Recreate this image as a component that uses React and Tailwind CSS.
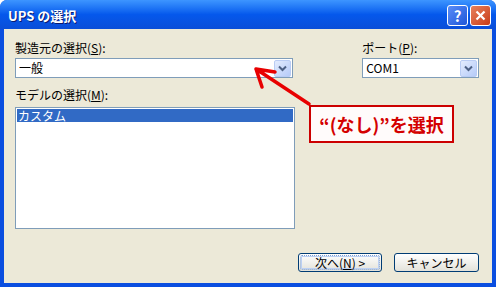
import React from "react";

const font = { fontFamily: '"Noto Sans CJK JP", "Noto Sans", sans-serif' };

function DropBtn() {
  return (
    <div className="w-[17px] h-[17px] rounded-[2px] border border-[#B9CCF4] bg-gradient-to-br from-[#E3ECFE] to-[#B6CBF8] flex items-center justify-center">
      <svg width="9" height="7" viewBox="0 0 9 7">
        <path d="M1 1.5 L4.5 5 L8 1.5" fill="none" stroke="#4D6185" strokeWidth="2" />
      </svg>
    </div>
  );
}

function Combo({ text, className }) {
  return (
    <div className={"h-[20px] border border-[#7F9DB9] bg-white flex items-center justify-between pl-[3px] pr-[1px] " + className}>
      <span className="text-[12px] leading-[14px] text-black">{text}</span>
      <DropBtn />
    </div>
  );
}

export default function App() {
  return (
    <div style={font} className="w-[496px] h-[287px] bg-[#0A4EE0] flex flex-col rounded-t-[7px] overflow-hidden">
      {/* Title bar */}
      <div className="h-[29px] shrink-0 flex items-center justify-between pl-[8px] pr-[5px] bg-gradient-to-b from-[#3D95FF] via-[#0558EC] to-[#0A4ED8]">
        <span className="text-white font-bold text-[13px] leading-[16px] mt-[2px] [text-shadow:1px_1px_0_#0A1A70]">UPS の選択</span>
        <div className="flex gap-[2px] mt-[1px]">
          <div className="w-[21px] h-[21px] rounded-[3px] border border-white bg-gradient-to-br from-[#5A8DF8] to-[#1E55D8] flex items-center justify-center text-white font-bold text-[15px] leading-none">?</div>
          <div className="w-[21px] h-[21px] rounded-[3px] border border-white bg-gradient-to-br from-[#E8805A] to-[#C73A14] flex items-center justify-center">
            <svg width="11" height="11" viewBox="0 0 11 11">
              <path d="M1.5 1.5 L9.5 9.5 M9.5 1.5 L1.5 9.5" stroke="white" strokeWidth="2.2" />
            </svg>
          </div>
        </div>
      </div>
      {/* Body */}
      <div className="relative flex-1 mx-[4px] mb-[4px] bg-[#ECE9D8] flex flex-col pt-[12px] pl-[11px] pr-[13px] pb-[11px]">
        <div className="flex">
          <div className="w-[279px] flex flex-col">
            <div className="text-[12px] leading-[14px] text-black">製造元の選択(<span className="underline">S</span>):</div>
            <Combo text="一般" className="mt-[3px]" />
          </div>
          <div className="ml-[69px] w-[117px] flex flex-col">
            <div className="text-[12px] leading-[14px] text-black">ポート(<span className="underline">P</span>):</div>
            <Combo text="COM1" className="mt-[3px]" />
          </div>
        </div>
        <div className="mt-[10px] text-[12px] leading-[14px] text-black">モデルの選択(<span className="underline">M</span>):</div>
        <div className="mt-[5px] w-[280px] h-[122px] border border-[#7F9DB9] bg-white p-[1px]">
          <div className="h-[13px] bg-[#316AC5] text-white text-[12px] leading-[13px] pl-[1px]">カスタム</div>
        </div>
        <div className="mt-auto flex justify-end gap-[12px]">
          <div className="w-[84px] h-[19px] rounded-[3px] border border-[#003C74] bg-gradient-to-b from-white to-[#E3E2DA] flex items-center justify-center p-[1px]">
            <div className="w-full h-full rounded-[2px] border border-dotted border-[#7C9FD3] shadow-[inset_0_0_0_1px_#BCD0F3] flex items-center justify-center text-[12px] leading-[14px] text-black">次へ(<span className="underline">N</span>) &gt;</div>
          </div>
          <div className="w-[85px] h-[19px] rounded-[3px] border border-[#003C74] bg-gradient-to-b from-white to-[#E3E2DA] flex items-center justify-center text-[12px] leading-[14px] text-black">キャンセル</div>
        </div>

        {/* Annotation arrow */}
        <svg className="absolute inset-0 pointer-events-none" width="488" height="254" viewBox="0 0 488 254">
          <path d="M305 75 L252 40 M252 40 L271 43 M252 40 L258 58" stroke="#E80000" strokeWidth="3.5" strokeLinecap="round" fill="none" />
        </svg>
        {/* Annotation box */}
        <div className="absolute left-[305px] top-[76px] w-[145px] h-[38px] border-2 border-[#CC0000] bg-[#FFFBFB] flex items-center justify-center">
          <span className="text-[#D40000] font-bold text-[18px] leading-[20px]">“(なし)”を選択</span>
        </div>
      </div>
    </div>
  );
}
